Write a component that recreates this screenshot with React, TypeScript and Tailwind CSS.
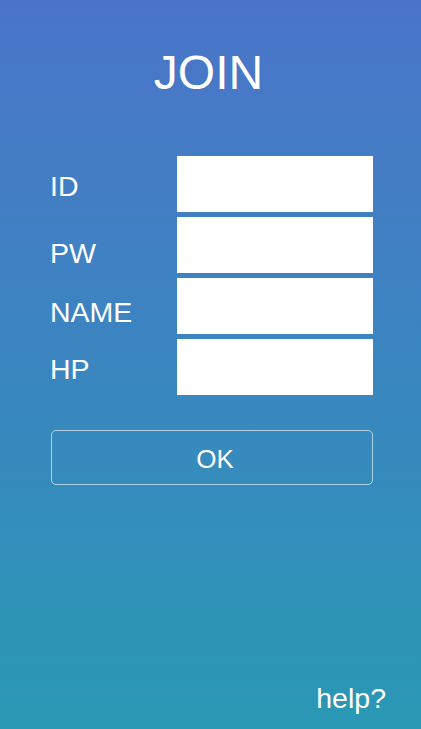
const fields = [
  { label: "ID", offset: "pt-[16px]" },
  { label: "PW", offset: "pt-[22px]" },
  { label: "NAME", offset: "pt-[20px]" },
  { label: "HP", offset: "pt-[16px]" },
];

export default function App() {
  return (
    <div className="flex min-h-[729px] w-full flex-col bg-gradient-to-b from-[#4a74c9] via-[#3a86c0] to-[#2998b4] font-['Liberation_Sans',Arial,sans-serif] text-white">
      <h1 className="mt-[49px] pr-[4px] text-center text-[48px] font-normal leading-none">JOIN</h1>

      <div className="ml-[50px] mt-[59px] w-[323px]">
        <div className="flex flex-col gap-[5px]">
          {fields.map((f) => (
            <div className="flex h-[56px]" key={f.label}>
              <label className={`w-[127px] text-[28.5px] leading-[28px] ${f.offset}`}>{f.label}</label>
              <input className="h-[56px] w-[196px] bg-white px-3 text-lg text-gray-800 outline-none" type="text" />
            </div>
          ))}
        </div>
        <button className="ml-[1px] mt-[35px] flex h-[55px] w-[322px] items-center justify-center rounded-[5px] border-[1.5px] border-white/60 pl-[6px] pt-[3px] text-[26px] leading-none">
          OK
        </button>
      </div>

      <div className="mt-auto flex justify-end pb-[17px] pr-[35px]">
        <span className="text-[28.5px] leading-[28px]">help?</span>
      </div>
    </div>
  );
}
